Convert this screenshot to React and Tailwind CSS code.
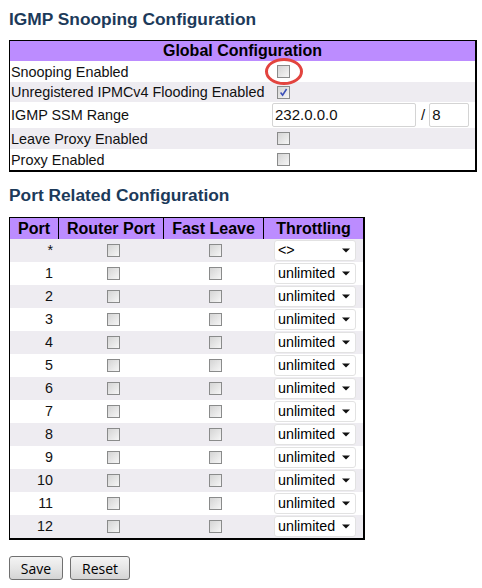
const font = { fontFamily: '"Liberation Sans", Arial, sans-serif' }

function Check({ checked }) {
  return (
    <span className="relative inline-block h-[13px] w-[13px] border border-[#8a8b8b] bg-linear-to-br from-[#d4d4d4] to-[#f6f6f6]">
      {checked && (
        <svg className="absolute left-0 top-0" width="11" height="11" viewBox="0 0 11 11">
          <path d="M2.6 5.6 L4.6 8.2 L8.6 2" fill="none" stroke="#3b4fb8" strokeWidth="1.6" />
        </svg>
      )}
    </span>
  )
}

function Select({ value }) {
  return (
    <div className="flex h-[21px] w-[82px] items-center justify-between rounded-[3px] border border-[#e2e2e2] bg-white pl-[3px] pr-[5px] text-[14.3px] text-black">
      <span>{value}</span>
      <svg width="8" height="5" viewBox="0 0 8 5">
        <path d="M0 0.5 H8 L4 4.5 Z" fill="#111" />
      </svg>
    </div>
  )
}

const globalRows = [
  { label: 'Snooping Enabled', kind: 'check', h: 'h-[21px]' },
  { label: 'Unregistered IPMCv4 Flooding Enabled', kind: 'checked', h: 'h-[20px]' },
  { label: 'IGMP SSM Range', kind: 'range', h: 'h-[26px]' },
  { label: 'Leave Proxy Enabled', kind: 'check', h: 'h-[21px]' },
  { label: 'Proxy Enabled', kind: 'check', h: 'h-[21px]' },
]

const ports = ['*', '1', '2', '3', '4', '5', '6', '7', '8', '9', '10', '11', '12']

export default function App() {
  return (
    <div className="min-h-[588px] bg-white pl-[9px] pt-[9px] text-[#111]" style={font}>
      <h1 className="text-[17.33px] font-bold leading-[20px] text-[#1c3a5a]">IGMP Snooping Configuration</h1>

      <div className="relative mt-[11px] w-[468px] border-b-2 border-l border-r-2 border-t border-black">
        <div className="h-[20px] bg-[#bc8cff] text-center text-[16px] font-bold leading-[20px] text-black">
          Global Configuration
        </div>
        {globalRows.map((row, i) => (
          <div key={row.label} className={`flex items-center ${row.h} ${i % 2 ? 'bg-[#eeecf1]' : 'bg-white'}`}>
            <div className="w-[261px] pl-[1px] text-[14.4px] leading-[18px]">{row.label}</div>
            {row.kind === 'range' ? (
              <div className="flex items-center">
                <div className="ml-[1px] flex h-[24px] w-[144px] items-center rounded-[2px] border border-[#d4d4d4] bg-white pl-[2px] text-[15px]">
                  232.0.0.0
                </div>
                <span className="ml-[5px] text-[15px]">/</span>
                <div className="ml-[4px] flex h-[24px] w-[40px] items-center rounded-[2px] border border-[#d4d4d4] bg-white pl-[2px] text-[15px]">
                  8
                </div>
              </div>
            ) : (
              <div className="ml-[6px] flex items-center">
                <Check checked={row.kind === 'checked'} />
              </div>
            )}
          </div>
        ))}
        <div className="absolute left-[255px] top-[17px] h-[27px] w-[38px] rounded-[50%] border-[3px] border-[#e2443f]" />
      </div>

      <h2 className="mt-[13px] text-[17.33px] font-bold leading-[20px] text-[#1c3a5a]">Port Related Configuration</h2>

      <div className="mt-[12px] w-[356px] border-b-2 border-l border-r-2 border-t border-black">
        <div className="grid h-[21px] grid-cols-[49px_105px_100px_99px] bg-[#bc8cff] text-[16px] font-bold leading-[21px] text-black">
          <div className="border-r border-black text-center">Port</div>
          <div className="border-r border-black text-center">Router Port</div>
          <div className="border-r border-black text-center">Fast Leave</div>
          <div className="text-center">Throttling</div>
        </div>
        {ports.map((p, i) => (
          <div
            key={p}
            className={`grid h-[23px] grid-cols-[49px_105px_100px_99px] items-center text-[14.3px] ${i % 2 ? 'bg-white' : 'bg-[#eeecf1]'}`}
          >
            <div className="pr-[6px] text-right">{p}</div>
            <div className="flex justify-center pl-[3px]">
              <Check />
            </div>
            <div className="flex justify-center pl-[3px]">
              <Check />
            </div>
            <div className="pl-[10px]">
              <Select value={p === '*' ? '<>' : 'unlimited'} />
            </div>
          </div>
        ))}
      </div>

      <div className="mt-[16px] flex gap-[7px]" style={{ fontFamily: '"Open Sans", "Liberation Sans", sans-serif' }}>
        <button className="h-[24px] w-[54px] rounded-[3px] border border-[#707070] bg-linear-to-b from-[#f4f4f4] via-[#e6e6e6] to-[#d4d4d4] text-[14px] text-black">
          Save
        </button>
        <button className="h-[24px] w-[60px] rounded-[3px] border border-[#707070] bg-linear-to-b from-[#f4f4f4] via-[#e6e6e6] to-[#d4d4d4] text-[14px] text-black">
          Reset
        </button>
      </div>
    </div>
  )
}
